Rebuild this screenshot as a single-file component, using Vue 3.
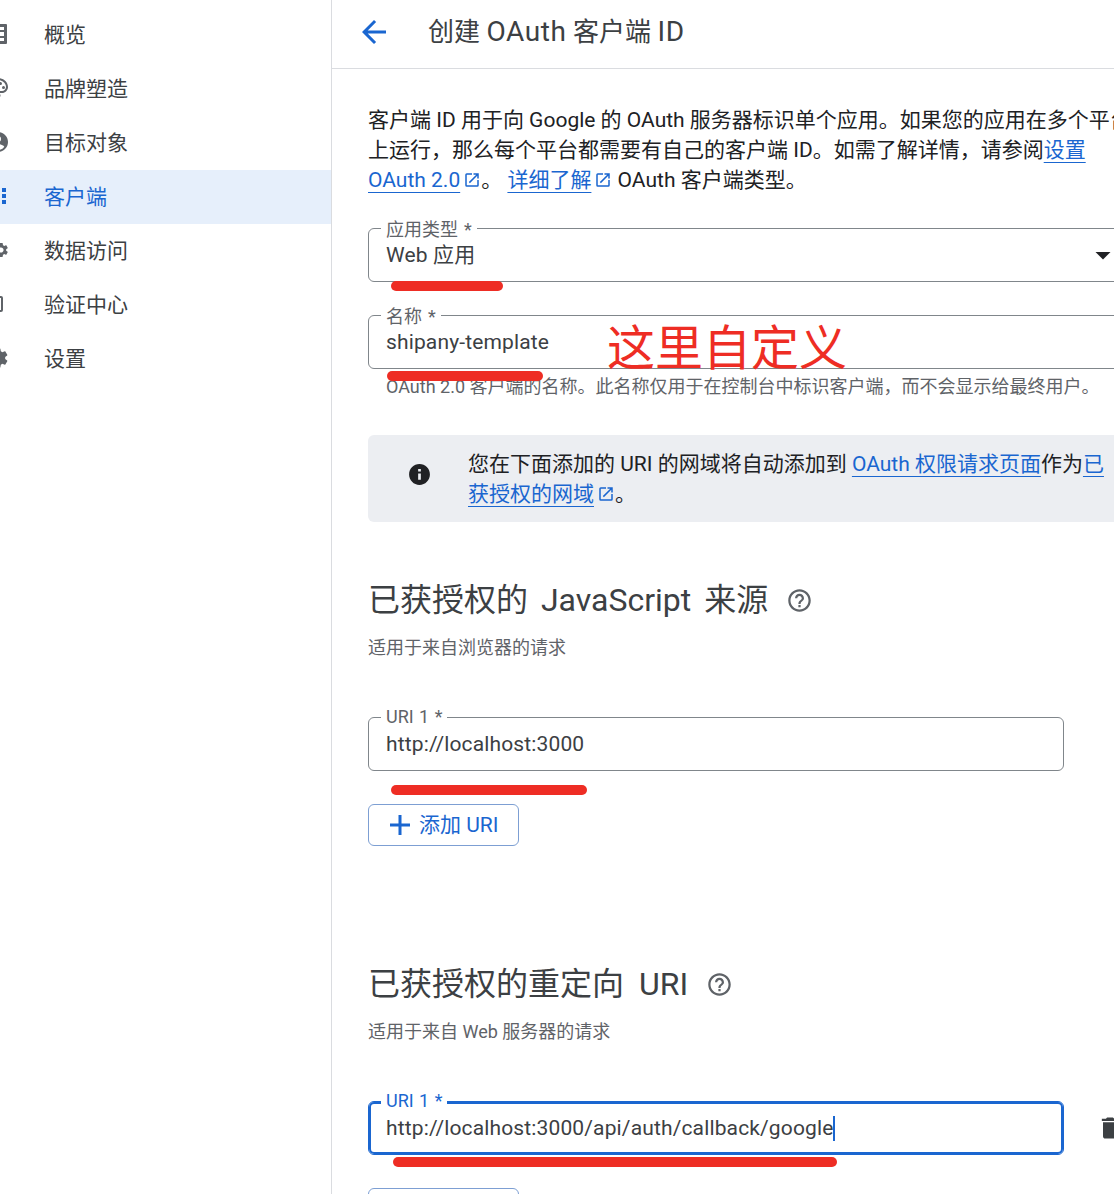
<script setup>
const gear = 'M19.14 12.94c.04-.3.06-.61.06-.94 0-.32-.02-.64-.07-.94l2.03-1.58c.18-.14.23-.41.12-.61l-1.92-3.32c-.12-.22-.37-.29-.59-.22l-2.39.96c-.5-.38-1.03-.7-1.62-.94l-.36-2.54c-.04-.24-.24-.41-.48-.41h-3.84c-.24 0-.43.17-.47.41l-.36 2.54c-.59.24-1.13.57-1.62.94l-2.39-.96c-.22-.08-.47 0-.59.22L2.74 8.87c-.12.21-.08.47.12.61l2.03 1.58c-.05.3-.09.63-.09.94s.02.64.07.94l-2.03 1.58c-.18.14-.23.41-.12.61l1.92 3.32c.12.22.37.29.59.22l2.39-.96c.5.38 1.03.7 1.62.94l.36 2.54c.05.24.24.41.48.41h3.84c.24 0 .44-.17.47-.41l.36-2.54c.59-.24 1.13-.56 1.62-.94l2.39.96c.22.08.47 0 .59-.22l1.92-3.32c.12-.22.07-.47-.12-.61l-2.01-1.58z'

const navItems = [
  { label: '概览', icon: 'M4 2h16a1 1 0 0 1 1 1v18a1 1 0 0 1-1 1H4a1 1 0 0 1-1-1V3a1 1 0 0 1 1-1zm2 3v3h12V5H6zm0 5v9h5v-9H6zm7 0v4h5v-4h-5zm0 6v3h5v-3h-5z' },
  { label: '品牌塑造', icon: 'M12 22C6.49 22 2 17.51 2 12S6.49 2 12 2s10 4.04 10 9c0 3.31-2.69 6-6 6h-1.77c-.28 0-.5.22-.5.5 0 .12.05.23.13.33.41.47.64 1.06.64 1.67 0 1.38-1.12 2.5-2.5 2.5zm0-18c-4.41 0-8 3.59-8 8s3.59 8 8 8c.28 0 .5-.22.5-.5 0-.16-.08-.28-.14-.35-.41-.46-.63-1.05-.63-1.65 0-1.38 1.12-2.5 2.5-2.5H16c2.21 0 4-1.79 4-4 0-3.86-3.59-7-8-7zM6.5 10a1.5 1.5 0 1 0 0 3 1.5 1.5 0 0 0 0-3zm3-4a1.5 1.5 0 1 0 0 3 1.5 1.5 0 0 0 0-3zm5 0a1.5 1.5 0 1 0 0 3 1.5 1.5 0 0 0 0-3zm3 4a1.5 1.5 0 1 0 0 3 1.5 1.5 0 0 0 0-3z' },
  { label: '目标对象', icon: 'M12 2C6.48 2 2 6.48 2 12s4.48 10 10 10 10-4.48 10-10S17.52 2 12 2zm0 4a3 3 0 1 1 0 6 3 3 0 0 1 0-6zm0 14c-2.6 0-4.9-1.3-6.3-3.3C6.9 15 9.9 14 12 14s5.1 1 6.3 2.7C16.9 18.7 14.6 20 12 20z' },
  { label: '客户端', active: true, icon: 'M4 8h4V4H4v4zm6 12h4v-4h-4v4zm-6 0h4v-4H4v4zm0-6h4v-4H4v4zm6 0h4v-4h-4v4zm6-10v4h4V4h-4zm-6 4h4V4h-4v4zm6 6h4v-4h-4v4zm0 6h4v-4h-4v4z' },
  { label: '数据访问', transform: 'translate(15 12) scale(.72) translate(-12 -12)', icon: gear + 'M12 15.6c-1.98 0-3.6-1.62-3.6-3.6s1.62-3.6 3.6-3.6 3.6 1.62 3.6 3.6-1.62 3.6-3.6 3.6z' },
  { label: '验证中心', icon: 'M3 4h12a2 2 0 0 1 2 2v12a2 2 0 0 1-2 2H3a2 2 0 0 1-2-2V6a2 2 0 0 1 2-2zm0 2v12h12V6H3z' },
  { label: '设置', icon: gear },
]

const helpIcon = 'M11 18h2v-2h-2v2zm1-16C6.48 2 2 6.48 2 12s4.48 10 10 10 10-4.48 10-10S17.52 2 12 2zm0 18c-4.41 0-8-3.59-8-8s3.59-8 8-8 8 3.59 8 8-3.59 8-8 8zm0-14c-2.21 0-4 1.79-4 4h2c0-1.1.9-2 2-2s2 .9 2 2c0 2-3 1.75-3 5h2c0-2.25 3-2.5 3-5 0-2.21-1.79-4-4-4z'
const extIcon = 'M19 19H5V5h7V3H5a2 2 0 0 0-2 2v14a2 2 0 0 0 2 2h14a2 2 0 0 0 2-2v-7h-2v7zM14 3v2h3.59l-9.83 9.83 1.41 1.41L19 6.41V10h2V3h-7z'
const plusIcon = 'M13.5 2h-3v8.5H2v3h8.5V22h3v-8.5H22v-3h-8.5z'
</script>

<template>
  <div class="page">
    <aside class="sidebar">
      <div
        v-for="item in navItems"
        :key="item.label"
        class="nav-item"
        :class="{ active: item.active }"
      >
        <svg class="nav-icon" viewBox="0 0 24 24"><path :d="item.icon" :transform="item.transform" fill-rule="evenodd" /></svg>
        <span>{{ item.label }}</span>
      </div>
    </aside>

    <main class="main">
      <header class="top-bar">
        <svg class="back-icon" viewBox="0 0 24 24"><path d="M20 11H7.83l5.59-5.59L12 4l-8 8 8 8 1.41-1.41L7.83 13H20v-2z" /></svg>
        <h1>创建 <span class="latin">OAuth</span> 客户端 <span class="latin">ID</span></h1>
      </header>

      <div class="content">
        <p class="intro">
          客户端 ID 用于向 Google 的 OAuth 服务器标识单个应用。如果您的应用在多个平台<br />
          上运行，那么每个平台都需要有自己的客户端 ID。如需了解详情，请参阅<a>设置</a><br />
          <a>OAuth 2.0</a><svg class="ext" viewBox="0 0 24 24"><path :d="extIcon" /></svg>。 <a>详细了解</a><svg class="ext" viewBox="0 0 24 24"><path :d="extIcon" /></svg> OAuth 客户端类型。
        </p>

        <div class="field wide select-field">
          <label>应用类型 *</label>
          <span>Web 应用</span>
          <svg class="drop" viewBox="0 0 24 24"><path d="M7 10l5 5 5-5z" /></svg>
        </div>

        <div class="field wide name-field">
          <label>名称 *</label>
          <span>shipany-template</span>
        </div>
        <p class="hint">OAuth 2.0 客户端的名称。此名称仅用于在控制台中标识客户端，而不会显示给最终用户。</p>

        <div class="notice wide">
          <svg class="info-icon" viewBox="0 0 24 24"><path d="M12 2C6.48 2 2 6.48 2 12s4.48 10 10 10 10-4.48 10-10S17.52 2 12 2zm1.3 15h-2.6v-6h2.6v6zm0-8h-2.6V6.6h2.6V9z" /></svg>
          <p>
            您在下面添加的 URI 的网域将自动添加到 <a>OAuth 权限请求页面</a>作为<a>已</a><br />
            <a>获授权的网域</a><svg class="ext" viewBox="0 0 24 24"><path :d="extIcon" /></svg>。
          </p>
        </div>

        <section class="first-section">
          <h2><span>已获授权的 JavaScript 来源</span><svg class="help" viewBox="0 0 24 24"><path :d="helpIcon" /></svg></h2>
          <p class="sub">适用于来自浏览器的请求</p>
          <div class="field uri">
            <label>URI 1 *</label>
            <span>http://localhost:3000</span>
          </div>
          <button class="add-btn">
            <svg viewBox="0 0 24 24"><path :d="plusIcon" /></svg>
            <span>添加 URI</span>
          </button>
        </section>

        <section class="second-section">
          <h2><span>已获授权的重定向 URI</span><svg class="help" viewBox="0 0 24 24"><path :d="helpIcon" /></svg></h2>
          <p class="sub">适用于来自 Web 服务器的请求</p>
          <div class="uri-row">
            <div class="field uri focused">
              <label>URI 1 *</label>
              <span>http://localhost:3000/api/auth/callback/google<i class="caret"></i></span>
            </div>
            <svg class="trash" viewBox="0 0 24 24"><path d="M6 19c0 1.1.9 2 2 2h8c1.1 0 2-.9 2-2V7H6v12zM19 4h-3.5l-1-1h-5l-1 1H5v2h14V4z" /></svg>
          </div>
          <button class="add-btn">
            <svg viewBox="0 0 24 24"><path :d="plusIcon" /></svg>
            <span>添加 URI</span>
          </button>
        </section>
      </div>
    </main>

    <!-- 截图上的红色标注 -->
    <i class="mark mark-type"></i>
    <i class="mark mark-name"></i>
    <i class="mark mark-origin"></i>
    <i class="mark mark-redirect"></i>
    <div class="mark-text">这里自定义</div>
  </div>
</template>

<style>
html,
body {
  margin: 0;
  overflow: hidden;
  background: #fff;
}
</style>

<style scoped>
.page {
  position: relative;
  display: flex;
  width: 1114px;
  height: 1194px;
  overflow: hidden;
  font-family: Roboto, "Noto Sans CJK SC", sans-serif;
  color: #202124;
}

.sidebar {
  flex: none;
  box-sizing: border-box;
  width: 332px;
  padding-top: 8px;
  border-right: 1px solid #dadce0;
  overflow: hidden;
}

.nav-item {
  display: flex;
  align-items: center;
  gap: 34px;
  box-sizing: border-box;
  height: 54px;
  padding-bottom: 4px;
  font-size: 21px;
  color: #3c4043;
}

.nav-item.active {
  background: #e6effb;
  color: #1a66d0;
}

.nav-icon {
  flex: none;
  width: 24px;
  height: 24px;
  margin: 2px 0 0 -14px;
  fill: #5f6368;
}

.active .nav-icon {
  fill: #1a66d0;
}

.main {
  flex: 1;
  min-width: 0;
  overflow: hidden;
}

.top-bar {
  display: flex;
  align-items: center;
  gap: 36px;
  box-sizing: border-box;
  height: 69px;
  padding: 0 0 5px 24px;
  border-bottom: 1px solid #dadce0;
}

.top-bar h1 {
  margin: -4px 0 0;
  font-size: 26px;
  font-weight: 400;
  color: #3c4043;
  white-space: nowrap;
}

.latin {
  font-size: 28px;
  letter-spacing: 0.6px;
}

.back-icon {
  width: 36px;
  height: 36px;
  fill: #1a66d0;
}

.content {
  width: 780px;
  padding: 36px 0 0 36px;
}

p {
  margin: 0;
}

a {
  color: #1a66d0;
  text-decoration: underline;
  text-underline-offset: 5px;
  text-decoration-thickness: 1px;
}

.intro {
  font-size: 21px;
  line-height: 30px;
  white-space: nowrap;
}

.ext {
  width: 18px;
  height: 18px;
  margin-left: 3px;
  vertical-align: -2px;
  fill: #1a66d0;
}

.field {
  position: relative;
  display: flex;
  align-items: center;
  box-sizing: border-box;
  height: 54px;
  padding: 0 17px;
  border: 1px solid #80868b;
  border-radius: 6px;
  font-size: 21px;
  letter-spacing: 0.14px;
  color: #3c4043;
}

.field label {
  position: absolute;
  top: -13px;
  left: 12px;
  padding: 0 5px;
  background: #fff;
  font-size: 18px;
  line-height: 24px;
  letter-spacing: 0;
  word-spacing: 1px;
  color: #5f6368;
}

.wide {
  width: 780px;
}

.select-field {
  margin-top: 33px;
  justify-content: space-between;
  padding-right: 26px;
}

.select-field span {
  margin-bottom: 5px;
}

.select-field label,
.name-field label {
  top: -11px;
  word-spacing: 1.5px;
}

.drop {
  width: 36px;
  height: 36px;
  fill: #202124;
}

.name-field {
  margin-top: 33px;
}

.hint {
  margin: 6px 0 0 18px;
  font-size: 18px;
  line-height: 24px;
  color: #5f6368;
  white-space: nowrap;
}

.notice {
  display: flex;
  align-items: center;
  gap: 36px;
  box-sizing: border-box;
  height: 87px;
  margin-top: 36px;
  padding-left: 39px;
  border-radius: 6px;
  background: #eceef2;
  font-size: 21px;
  line-height: 30px;
  white-space: nowrap;
}

.info-icon {
  flex: none;
  width: 25px;
  height: 25px;
  margin-bottom: 9px;
  fill: #202124;
}

.first-section {
  margin-top: 56px;
}

.second-section {
  margin-top: 116px;
}

h2 {
  display: flex;
  align-items: center;
  gap: 18px;
  margin: 0;
  font-size: 32px;
  font-weight: 400;
  line-height: 44px;
  word-spacing: 5px;
  color: #3c4043;
}

.second-section h2 {
  word-spacing: 7px;
}

.help {
  width: 27px;
  height: 27px;
  fill: #5f6368;
}

.sub {
  margin-top: 14px;
  font-size: 18px;
  line-height: 24px;
  color: #5f6368;
}

.uri {
  width: 696px;
  margin-top: 57px;
}

.uri-row {
  display: flex;
  align-items: flex-end;
  gap: 32px;
}

.trash {
  flex: none;
  width: 28px;
  height: 28px;
  margin-bottom: 13px;
  fill: #3c4043;
}

.focused {
  padding-top: 1px;
  border-color: #1a66d0;
  box-shadow: inset 0 0 0 2px #1a66d0;
}

.focused label {
  color: #1a66d0;
}

.caret {
  display: inline-block;
  width: 2px;
  height: 25px;
  vertical-align: middle;
  background: #1a66d0;
}

.add-btn {
  display: flex;
  align-items: center;
  gap: 7px;
  box-sizing: border-box;
  width: 151px;
  height: 42px;
  margin-top: 33px;
  padding: 0 0 0 19px;
  border: 1px solid #7d9fd3;
  border-radius: 6px;
  background: #fff;
  font-family: inherit;
  font-size: 21px;
  color: #1a66d0;
}

.add-btn span {
  margin-bottom: 4px;
}

.add-btn svg {
  flex: none;
  width: 24px;
  height: 24px;
  fill: #1a66d0;
}

.mark {
  position: absolute;
  height: 10px;
  border-radius: 5px;
  background: #ee2d24;
}

.mark-type {
  top: 281px;
  left: 391px;
  width: 112px;
}

.mark-name {
  top: 371px;
  left: 387px;
  width: 156px;
}

.mark-origin {
  top: 785px;
  left: 391px;
  width: 196px;
}

.mark-redirect {
  top: 1157px;
  left: 393px;
  width: 444px;
}

.mark-text {
  position: absolute;
  top: 316px;
  left: 607px;
  font-size: 48px;
  line-height: 66px;
  color: #ee2d24;
  white-space: nowrap;
}
</style>
